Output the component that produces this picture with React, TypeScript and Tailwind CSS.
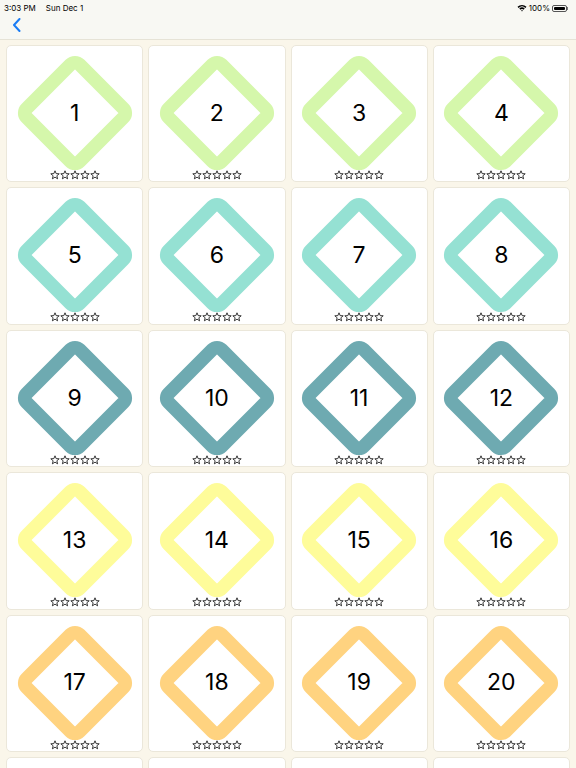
import React from 'react';

const rowColors = ['#d5f7ab', '#95e1d3', '#6eaab1', '#fefc9a', '#ffd380', '#d5f7ab'];

const Star = () => (
    <svg width="10" height="10" viewBox="0 0 10 10">
        <path
            d="M5 0.8 L6.15 3.6 L9.2 3.8 L6.85 5.75 L7.6 8.8 L5 7.15 L2.4 8.8 L3.15 5.75 L0.8 3.8 L3.85 3.6 Z"
            fill="none"
            stroke="#222"
            strokeWidth="0.9"
            strokeLinejoin="round"
        />
    </svg>
);

const Diamond: React.FC<{ color: string; n: number }> = ({ color, n }) => (
    <div className="relative w-[120px] h-[120px]">
        <svg viewBox="0 0 120 120" className="absolute inset-0 w-full h-full">
            <rect
                x="22.5"
                y="22.5"
                width="75"
                height="75"
                rx="6.5"
                fill="none"
                stroke={color}
                strokeWidth="13.5"
                transform="rotate(45 60 60)"
            />
        </svg>
        <div className="absolute inset-0 flex items-center justify-center text-[23px] text-black font-['Inter','Liberation_Sans',sans-serif]">
            {n}
        </div>
    </div>
);

export default function App() {
    const items = Array.from({ length: 24 }, (_, i) => i + 1);

    return (
        <div className="w-[576px] h-[768px] overflow-hidden bg-[#faf6ea] font-['Inter','Liberation_Sans',sans-serif]">
            {/* Status + nav bar */}
            <div className="h-[40px] bg-[#f8f8f3] border-b border-[#e6e3d6]">
                <div className="h-[14px] flex items-end justify-between px-[4px] text-[8px] text-black">
                    <div className="flex gap-[10px]">
                        <span>3:03 PM</span>
                        <span>Sun Dec 1</span>
                    </div>
                    <div className="flex items-center gap-[2px] pr-[4px]">
                        <svg width="10" height="8" viewBox="0 0 10 8">
                            <path d="M0.5 2.8 A6.5 6.5 0 0 1 9.5 2.8 L8.4 3.9 A5 5 0 0 0 1.6 3.9 Z" fill="#000" />
                            <path d="M2.3 4.6 A4 4 0 0 1 7.7 4.6 L6.6 5.7 A2.5 2.5 0 0 0 3.4 5.7 Z" fill="#000" />
                            <path d="M4.1 6.4 A1.5 1.5 0 0 1 5.9 6.4 L5 7.5 Z" fill="#000" />
                        </svg>
                        <span>100%</span>
                        <div className="flex items-center">
                            <div className="w-[15px] h-[7px] rounded-[2px] border border-[#555] p-[1px]">
                                <div className="w-full h-full bg-black rounded-[1px]" />
                            </div>
                            <div className="w-[1px] h-[3px] bg-[#777]" />
                        </div>
                    </div>
                </div>
                <div className="flex pl-[12px] pt-[4px]">
                    <svg width="10" height="14" viewBox="0 0 10 14">
                        <path d="M7.5 1 L2 7 L7.5 13" fill="none" stroke="#1a7cf5" strokeWidth="2" strokeLinecap="round" strokeLinejoin="round" />
                    </svg>
                </div>
            </div>

            {/* Level grid */}
            <div className="grid grid-cols-4 gap-[5px] px-[6px] pt-[5px]">
                {items.map((n) => (
                    <div
                        key={n}
                        className="h-[137.4px] bg-white border border-[#ebe7da] rounded-[5px] flex flex-col items-center pt-[7px]"
                    >
                        <Diamond color={rowColors[Math.floor((n - 1) / 4)]} n={n} />
                        <div className="-mt-[3px] flex">
                            <Star />
                            <Star />
                            <Star />
                            <Star />
                            <Star />
                        </div>
                    </div>
                ))}
            </div>
        </div>
    );
}
